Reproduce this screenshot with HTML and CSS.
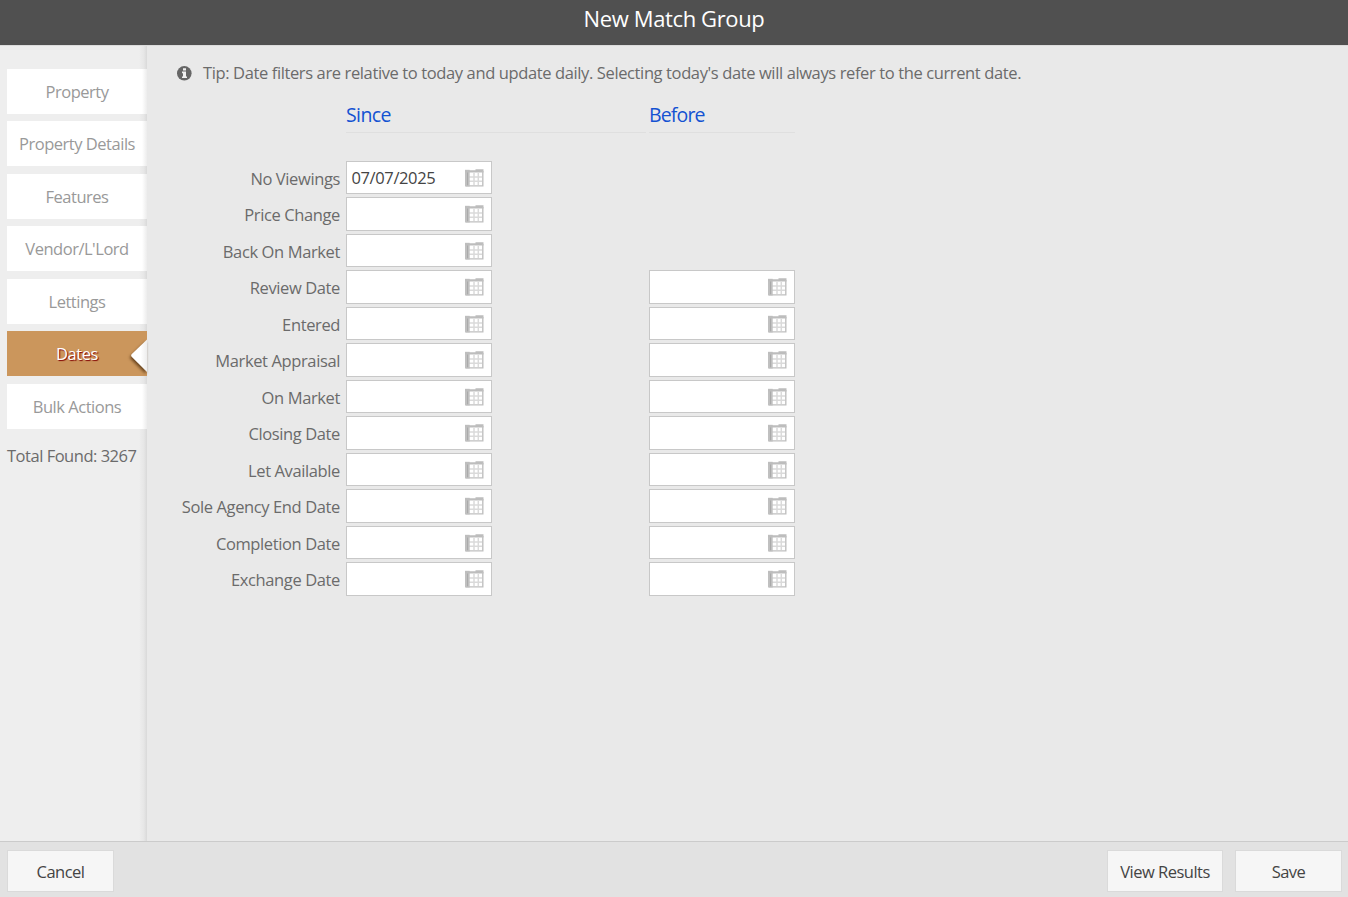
FILE: index.html
```html
<!DOCTYPE html>
<html lang="en">
    <head>
        <meta charset="UTF-8">
        <meta name="viewport" content="width=device-width, initial-scale=1.0">
        <title>New Match Group</title>
        <link rel="stylesheet" href="styles.css">
    </head>

    <body>
        <svg class="defs">
            <symbol id="calendar" viewBox="0 0 20 18">
                <rect x="2" y="2" width="17" height="15" fill="#fff" />
                <path d="M5 8h13M5 12.3h13M10 4v12M14.3 4v12" stroke="#dadada" stroke-width="1.5" fill="none" />
                <path d="M1 .8h4.7v16.7H1z" fill="#c0c0c0" />
                <path d="M3.5 3v14" stroke="#aaa" stroke-width="1" />
                <path d="M1 1.2h10.5V.3h8v3.2H1z" fill="#bdbdbd" />
                <path d="M18.8 2v14.9H2" stroke="#c0c0c0" stroke-width="1.4" fill="none" />
            </symbol>
        </svg>

        <div class="header">New Match Group</div>

        <div class="content">
            <div class="sidebar">
                <a class="tab">Property</a>
                <a class="tab">Property Details</a>
                <a class="tab">Features</a>
                <a class="tab">Vendor/L'Lord</a>
                <a class="tab">Lettings</a>
                <a class="tab active">Dates
                    <svg class="arrow" width="20" height="38" viewBox="0 0 20 38">
                        <linearGradient id="fade">
                            <stop offset="0.6" stop-color="#fff" />
                            <stop offset="1" stop-color="#ededed" />
                        </linearGradient>
                        <path d="M20 2.5L4.6 17.3Q3.6 18.5 4.6 19.7L20 35z" fill="url(#fade)" />
                    </svg>
                </a>
                <a class="tab">Bulk Actions</a>
                <p class="total">Total Found: 3267</p>
            </div>

            <div class="main">
                <div class="tip">
                    <svg class="info" width="15" height="15" viewBox="0 0 15 15">
                        <circle cx="7.3" cy="7.3" r="7.3" fill="#666" />
                        <path d="M6 2.3h3v2.1H6zM5 5.6h4v4.8h1v1.7H5v-1.7h1V7.3H5z" fill="#f0f0f0" />
                    </svg>
                    <span>Tip: Date filters are relative to today and update daily. Selecting today's date will always refer to the current date.</span>
                </div>

                <div class="row headings">
                    <div class="since">Since</div>
                    <div class="before">Before</div>
                </div>

                <div class="dates">
                    <div class="row">
                        <label>No Viewings</label>
                        <div class="field"><span>07/07/2025</span><svg class="cal"><use href="#calendar" /></svg></div>
                    </div>
                    <div class="row">
                        <label>Price Change</label>
                        <div class="field"><svg class="cal"><use href="#calendar" /></svg></div>
                    </div>
                    <div class="row">
                        <label>Back On Market</label>
                        <div class="field"><svg class="cal"><use href="#calendar" /></svg></div>
                    </div>
                    <div class="row">
                        <label>Review Date</label>
                        <div class="field"><svg class="cal"><use href="#calendar" /></svg></div>
                        <div class="field"><svg class="cal"><use href="#calendar" /></svg></div>
                    </div>
                    <div class="row">
                        <label>Entered</label>
                        <div class="field"><svg class="cal"><use href="#calendar" /></svg></div>
                        <div class="field"><svg class="cal"><use href="#calendar" /></svg></div>
                    </div>
                    <div class="row">
                        <label>Market Appraisal</label>
                        <div class="field"><svg class="cal"><use href="#calendar" /></svg></div>
                        <div class="field"><svg class="cal"><use href="#calendar" /></svg></div>
                    </div>
                    <div class="row">
                        <label>On Market</label>
                        <div class="field"><svg class="cal"><use href="#calendar" /></svg></div>
                        <div class="field"><svg class="cal"><use href="#calendar" /></svg></div>
                    </div>
                    <div class="row">
                        <label>Closing Date</label>
                        <div class="field"><svg class="cal"><use href="#calendar" /></svg></div>
                        <div class="field"><svg class="cal"><use href="#calendar" /></svg></div>
                    </div>
                    <div class="row">
                        <label>Let Available</label>
                        <div class="field"><svg class="cal"><use href="#calendar" /></svg></div>
                        <div class="field"><svg class="cal"><use href="#calendar" /></svg></div>
                    </div>
                    <div class="row">
                        <label>Sole Agency End Date</label>
                        <div class="field"><svg class="cal"><use href="#calendar" /></svg></div>
                        <div class="field"><svg class="cal"><use href="#calendar" /></svg></div>
                    </div>
                    <div class="row">
                        <label>Completion Date</label>
                        <div class="field"><svg class="cal"><use href="#calendar" /></svg></div>
                        <div class="field"><svg class="cal"><use href="#calendar" /></svg></div>
                    </div>
                    <div class="row">
                        <label>Exchange Date</label>
                        <div class="field"><svg class="cal"><use href="#calendar" /></svg></div>
                        <div class="field"><svg class="cal"><use href="#calendar" /></svg></div>
                    </div>
                </div>
            </div>
        </div>

        <div class="footer">
            <button class="cancel">Cancel</button>
            <button class="results">View Results</button>
            <button class="save">Save</button>
        </div>
    </body>
</html>
```
FILE: styles.css
```css
*{
    box-sizing: border-box;
}

body{
    margin: 0;
    height: 100vh;
    display: flex;
    flex-direction: column;
    overflow: hidden;
    background: #e9e9e9;
    color: #6b6b6b;
    font-family: "Open Sans", "Noto Sans", sans-serif;
    font-size: 16.5px;
    line-height: 24px;
    letter-spacing: -0.38px;
}

.defs{
    display: none;
}

.header{
    height: 45px;
    flex: none;
    padding-top: 3px;
    background: #505050;
    color: #fff;
    font-size: 22px;
    line-height: 30px;
    text-align: center;
}

.content{
    flex: 1;
    display: flex;
    border-top: 1px solid #dcdcdc;
}

.sidebar{
    width: 147px;
    padding: 22.9px 0 0 7px;
    display: flex;
    flex-direction: column;
    gap: 7.5px;
    background: linear-gradient(to left, #d9d9d9 0, #e6e6e6 3px, #eee 8px);
    letter-spacing: -0.48px;
}

.tab{
    height: 45px;
    flex: none;
    background: linear-gradient(to left, #ececec 0, #fff 5px);
    color: #999;
    line-height: 46px;
    text-align: center;
}

.active{
    position: relative;
    background: #cb965c;
    color: #fff;
    text-shadow: 1px 1px 1px #800000;
}

.arrow{
    position: absolute;
    right: 0;
    top: 6px;
    filter: drop-shadow(-1px 2px 1.5px rgba(60, 30, 0, 0.7));
}

.total{
    margin: 8px 0 0;
}

.main{
    flex: 1;
    padding-left: 30px;
}

.tip{
    display: flex;
    align-items: center;
    gap: 11px;
    margin-top: 15px;
}

.row{
    display: flex;
    height: 33.5px;
}

.headings{
    gap: 3px;
    height: 33px;
    margin: 15px 0 27.9px 169px;
    color: #1452d2;
    font-size: 19.5px;
    line-height: 30px;
    letter-spacing: -0.6px;
}

.since, .before{
    border-bottom: 1px solid #dfdfdf;
}

.since{
    width: 300px;
}

.before{
    width: 146px;
    letter-spacing: -0.85px;
}

.dates{
    display: flex;
    flex-direction: column;
    gap: 3px;
}

label{
    width: 163px;
    margin-right: 6px;
    line-height: 36.4px;
    text-align: right;
    letter-spacing: -0.38px;
}

.field{
    width: 146px;
    height: 33.5px;
    padding: 0 7px 0 4.5px;
    display: flex;
    align-items: center;
    background: #fff;
    border: 1px solid #c8c8c8;
    color: #444;
}

.field + .field{
    margin-left: 157px;
}

.cal{
    width: 20px;
    height: 18px;
    margin-left: auto;
}

.footer{
    height: 56px;
    flex: none;
    display: flex;
    align-items: flex-start;
    gap: 12px;
    padding: 8px 6px 0 7px;
    background: #e2e2e2;
    border-top: 1px solid #cbcbcb;
}

.footer button{
    width: 107px;
    height: 42px;
    padding: 2px 0 0;
    background: #f6f6f6;
    border: 1px solid #dadada;
    color: #444;
    font: inherit;
    letter-spacing: -0.5px;
}

.footer .results{
    width: 116px;
    margin-left: auto;
}
```
